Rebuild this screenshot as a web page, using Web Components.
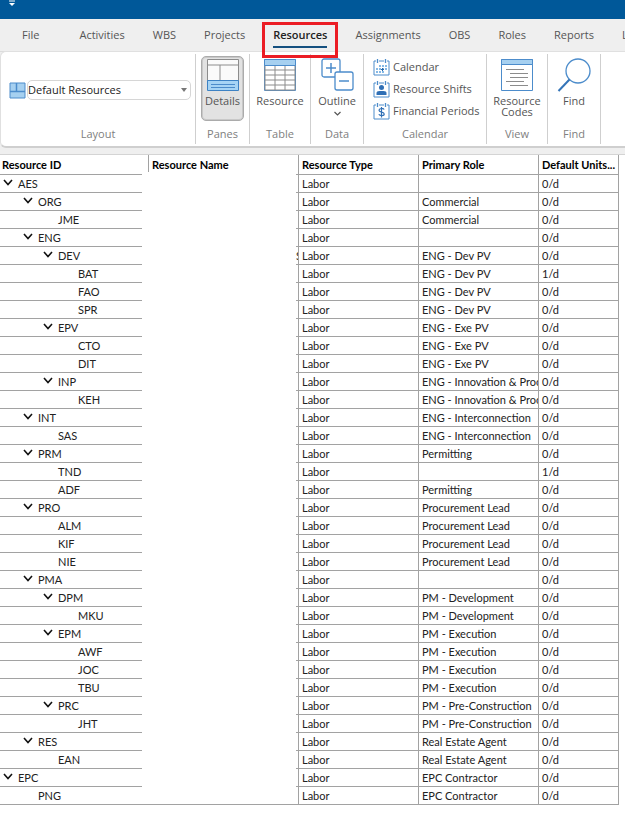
<!DOCTYPE html>
<html lang="en">
<head>
<meta charset="utf-8">
<title>Resources</title>
<style>
  html, body { margin: 0; }
  body {
    background: #fff;
    color: #444;
    font: 11px/16px "Open Sans", "Noto Sans", sans-serif;
    overflow-x: hidden;
  }
</style>
</head>
<body>
<resource-app></resource-app>

<template id="resource-app">
  <style>
    :host { display: block; }
    .chrome { background: #efefef; overflow: hidden; padding-bottom: 6px; }
    .small { width: 17px; height: 17px; flex: none; }
    .large { width: 34px; height: 34px; display: block; }
    svg { fill: none; stroke: #4c8ccb; }
  </style>
  <div class="chrome">
    <title-bar></title-bar>
    <ribbon-tabs>
      <ribbon-tab class="file">File</ribbon-tab>
      <ribbon-tab>Activities</ribbon-tab>
      <ribbon-tab>WBS</ribbon-tab>
      <ribbon-tab>Projects</ribbon-tab>
      <ribbon-tab selected>Resources</ribbon-tab>
      <ribbon-tab>Assignments</ribbon-tab>
      <ribbon-tab>OBS</ribbon-tab>
      <ribbon-tab>Roles</ribbon-tab>
      <ribbon-tab>Reports</ribbon-tab>
      <ribbon-tab>L</ribbon-tab>
    </ribbon-tabs>
    <ribbon-panel>
      <ribbon-group label="Layout" style="--width:195px">
        <layout-picker>
          <svg slot="icon" class="small" viewBox="0 0 17 17"><path d="M1 1h15v15H1z" fill="#a6d0f0"/><path d="M1 9.500h15M7.500 1v8.500" stroke-width="1.500"/></svg>
        </layout-picker>
      </ribbon-group>
      <ribbon-group label="Panes" style="--width:54px">
        <ribbon-button pressed label="Details">
          <svg class="large" viewBox="0 0 34 34"><path d="M1.500 1.500h31v22h-31z" fill="#fafafa" stroke="#8c8c8c"/><path d="M1.500 7h31M14 7v15" stroke="#8c8c8c"/><path d="M1.500 22.500h31v10h-31z" fill="#a6d4f5" stroke="#3d82c4"/><path d="M5 26.500h24M5 29.500h24"/></svg>
        </ribbon-button>
      </ribbon-group>
      <ribbon-group label="Table" style="--width:61px">
        <ribbon-button label="Resource">
          <svg class="large" viewBox="0 0 34 34"><path d="M1.500 1.500h31v31h-31z" fill="#fff"/><path d="M2 7v25M12 7v25M22 7v25M32 7v25M2 12h30M2 17h30M2 22h30M2 27h30M2 32h30" stroke="#8c8c8c"/><path d="M1.500 1.500h31v6h-31z" fill="#a6d0f0"/></svg>
        </ribbon-button>
      </ribbon-group>
      <ribbon-group label="Data" style="--width:53px">
        <ribbon-button label="Outline" menu>
          <svg class="large" viewBox="-1 0 34 34"><rect x="1" y="1" width="18" height="18" rx="2" fill="#fff" stroke-width="1.300"/><path d="M5 10h10M10 5v10" stroke-width="1.500"/><rect x="14" y="14" width="18" height="18" rx="2" fill="#fff" stroke-width="1.300"/><path d="M18 23h10" stroke-width="1.500"/></svg>
        </ribbon-button>
      </ribbon-group>
      <ribbon-group label="Calendar" style="--width:123px">
        <ribbon-button row label="Calendar">
          <svg class="small" viewBox="0 0 17 17"><path d="M3 2H1v14h15V2h-2M6 2h5"/><path d="M4.500 0v4M12.500 0v4" stroke-width="1.300"/><path d="M6 7h8M3 10h11M3 13h8" stroke="#85b9e6" stroke-width="2" stroke-dasharray="2 1"/><path d="M8 10.500h3M9.500 9v3" stroke="#2466aa"/></svg>
        </ribbon-button>
        <ribbon-button row label="Resource Shifts">
          <svg class="small" viewBox="0 0 17 17"><path d="M3 2H1v14h15V2h-2M6 2h5"/><path d="M4.500 0v4M12.500 0v4" stroke-width="1.300"/><circle cx="8.500" cy="6.500" r="2.500" fill="#2f6fb5" stroke="none"/><path d="M3.500 14v-2q0-2 3-2h4q3 0 3 2v2z" fill="#2f6fb5" stroke="none"/></svg>
        </ribbon-button>
        <ribbon-button row label="Financial Periods">
          <svg class="small" viewBox="0 0 17 17"><path d="M3 2H1v14h15V2h-2M6 2h5"/><path d="M4.500 0v4M12.500 0v4" stroke-width="1.300"/><path d="M11.200 6.500C10 5 6 5 6 7.300S11.200 8.800 11.200 11 7 13.200 5.800 11.300M8.500 4v10.500" stroke="#2f6fb5" stroke-width="1.200"/></svg>
        </ribbon-button>
      </ribbon-group>
      <ribbon-group label="View" style="--width:61px">
        <ribbon-button label="Resource Codes">
          <svg class="large" viewBox="0 0 34 34"><path d="M1.500 1.500h31v31h-31z" fill="#fff"/><path d="M1.500 1.500h31v5h-31z" fill="#a6d0f0"/><path d="M6 11.500h18M10 15.500h18M10 19.500h18M6 23.500h18M10 27.500h18" stroke="#8c8c8c"/></svg>
        </ribbon-button>
      </ribbon-group>
      <ribbon-group label="Find" style="--width:53px">
        <ribbon-button label="Find">
          <svg class="large" viewBox="0 0 34 34"><circle cx="21" cy="13" r="12" fill="#fff" stroke-width="1.300"/><path d="M12.500 21.500L1.500 33" stroke="#3474b8" stroke-width="2"/></svg>
        </ribbon-button>
      </ribbon-group>
    </ribbon-panel>
  </div>
  <resource-grid></resource-grid>
</template>

<template id="title-bar">
  <style>
    :host { display: block; height: 19px; background: #005899; }
    button { display: block; margin-left: 7px; padding: 0; border: 0; background: none; }
    svg { display: block; width: 10px; height: 7px; }
  </style>
  <button aria-label="Customize toolbar"><svg viewBox="0 0 10 7"><path d="M2 1h6" stroke="#fff"/><path d="M2 3h6L5 6z" fill="#fff"/></svg></button>
</template>

<template id="ribbon-tabs">
  <style>
    :host { display: block; }
    nav { display: flex; height: 32px; border-bottom: 1px solid #dcdcdc; }
  </style>
  <nav><slot></slot></nav>
</template>

<template id="ribbon-tab">
  <style>
    :host { display: block; flex: none; position: relative; padding: 8px 14px 0; color: #555; }
    :host(.file) { padding: 8px 26px 0 22px; }
    a { display: block; color: inherit; text-decoration: none; white-space: nowrap; height: 19px; }
    :host([selected]) { font-weight: 600; color: #222; }
    :host([selected]) a { border-bottom: 2px solid #14507f; }
    :host([selected])::after {
      content: ""; position: absolute; z-index: 2; top: 3px; bottom: -7px; left: 3px; right: 3px;
      border: 3px solid #eb1c24;
    }
  </style>
  <a href="#"><slot></slot></a>
</template>

<template id="ribbon-panel">
  <style>
    :host {
      display: flex; box-sizing: border-box; height: 97px; margin: -1px -8px 0 0; background: #fff;
      border: 1px solid #e0e0e0; border-bottom: 2px solid #cfcfcf; border-radius: 6px;
    }
  </style>
  <slot></slot>
</template>

<template id="ribbon-group">
  <style>
    :host {
      display: flex; flex-direction: column; flex: none; box-sizing: border-box; width: var(--width);
      margin: 2px 0; border-right: 1px solid #cfcfcf;
    }
    .items { flex: 1; padding-top: 2px; }
    .label { text-align: center; color: #808080; height: 18px; }
  </style>
  <div class="items"><slot></slot></div>
  <div class="label"></div>
</template>

<template id="ribbon-button">
  <style>
    :host { display: flex; justify-content: center; }
    button {
      display: flex; flex-direction: column; align-items: center; box-sizing: border-box;
      padding: 1px 0 0; border: 1px solid transparent; border-radius: 5px; background: none;
      font: inherit; line-height: 11px; color: #555; height: 65px; min-width: 43px;
    }
    .text { padding-top: 3px; max-width: 56px; }
    :host([pressed]) button { background: #e2e2e2; border-color: #ababab; box-shadow: inset 0 0 0 1px #c8c8c8; }
    :host([row]) { justify-content: flex-start; }
    :host([row]) button { flex-direction: row; gap: 3px; height: 22px; padding: 0 0 0 8px; }
    :host([row]) .text { padding: 0; max-width: none; white-space: nowrap; line-height: 16px; }
    .chevron { display: none; width: 7px; height: 5px; margin-top: 5px; }
    :host([menu]) .chevron { display: block; }
  </style>
  <button><slot></slot><span class="text"></span><svg class="chevron" viewBox="0 0 7 5"><path d="M.5 1l3 3 3-3" fill="none" stroke="#555" stroke-width="1.200"/></svg></button>
</template>

<template id="layout-picker">
  <style>
    :host { display: flex; align-items: center; gap: 1px; padding: 24px 4px 0 8px; }
    .box { flex: 1; position: relative; display: flex; align-items: center; }
    select {
      appearance: none; width: 100%; height: 20px; padding: 0 16px 0 0; border: 1px solid #d6d6d6; border-radius: 5px;
      background: #fff; font: inherit; color: #222;
    }
    .arrow { position: absolute; right: 4px; width: 6px; height: 4px; pointer-events: none; }
  </style>
  <slot name="icon"></slot>
  <div class="box">
    <select aria-label="Layout"><option>Default Resources</option></select>
    <svg class="arrow" viewBox="0 0 6 4"><path d="M0 0h6L3 4z" fill="#777"/></svg>
  </div>
</template>

<template id="resource-grid">
  <style>
    :host { display: block; border-top: 1px solid #d4d4d4; font: 11px/17px Lato, Carlito, sans-serif; color: #222; --line: #a2a2a2; }
    table { width: calc(100% - 6px); table-layout: fixed; border-collapse: separate; border-spacing: 0; }
    .id { width: 149px; } .name { width: 150px; } .type, .role { width: 120px; }
    th, td {
      box-sizing: border-box; padding: 0 0 0 3px; text-align: left; white-space: nowrap; overflow: hidden;
      border-right: 1px solid var(--line); border-bottom: 1px solid var(--line); height: 18px;
    }
    th { height: 20px; font-weight: 700; color: #000; }
    th:nth-child(-n+2), td:nth-child(-n+2) { border-bottom: 0; padding-bottom: 1px; background: linear-gradient(var(--line), var(--line)) no-repeat; }
    th:nth-child(1), td:nth-child(1) { border-right: 0; padding-left: 2px; background-size: calc(100% - 7px) 1px; background-position: left bottom; }
    th:nth-child(2), td:nth-child(2) { background-size: 2px 1px; background-position: right bottom; }
    th:nth-child(1) { background-image: linear-gradient(var(--line), var(--line)), linear-gradient(var(--line), var(--line)); background-size: calc(100% - 7px) 1px, 1px 17px; background-position: left bottom, right top; }
    tbody tr:last-child td:nth-child(-n+2) { background-size: 100% 1px; }
    .node { display: flex; align-items: center; padding-left: calc(var(--depth) * 20px); height: 17px; }
    button { width: 16px; height: 17px; padding: 0 0 3px 1px; border: 0; background: none; display: flex; align-items: center; flex: none; }
    .gap { width: 16px; flex: none; }
    button svg { width: 10px; height: 7px; }
    .cut { display: block; width: 2px; height: 17px; margin-left: auto; overflow: hidden; }
  </style>
  <table>
    <colgroup><col class="id"><col class="name"><col class="type"><col class="role"><col></colgroup>
    <thead><tr><th>Resource ID</th><th>Resource Name</th><th>Resource Type</th><th>Primary Role</th><th>Default Units...</th></tr></thead>
    <tbody></tbody>
  </table>
</template>

<script>
  class BaseElement extends HTMLElement {
    constructor() {
      super();
      const template = document.getElementById(this.localName);
      this.attachShadow({ mode: "open" }).append(template.content.cloneNode(true));
    }
  }

  class RibbonGroup extends BaseElement {
    connectedCallback() {
      this.shadowRoot.querySelector(".label").textContent = this.getAttribute("label");
    }
  }

  class RibbonButton extends BaseElement {
    connectedCallback() {
      this.shadowRoot.querySelector(".text").textContent = this.getAttribute("label");
      if (this.hasAttribute("pressed")) {
        this.shadowRoot.querySelector("button").setAttribute("aria-pressed", "true");
      }
    }
  }

  // Each row: depth, id, role, units, has children, visible part of the name
  const ROWS = [
    [0, "AES", "", "0/d", 1], [1, "ORG", "Commercial", "0/d", 1], [2, "JME", "Commercial", "0/d"],
    [1, "ENG", "", "0/d", 1], [2, "DEV", "ENG - Dev PV", "0/d", 1, "S"],
    [3, "BAT", "ENG - Dev PV", "1/d"], [3, "FAO", "ENG - Dev PV", "0/d"], [3, "SPR", "ENG - Dev PV", "0/d"],
    [2, "EPV", "ENG - Exe PV", "0/d", 1], [3, "CTO", "ENG - Exe PV", "0/d"], [3, "DIT", "ENG - Exe PV", "0/d"],
    [2, "INP", "ENG - Innovation & Proc", "0/d", 1], [3, "KEH", "ENG - Innovation & Proc", "0/d"],
    [1, "INT", "ENG - Interconnection", "0/d", 1], [2, "SAS", "ENG - Interconnection", "0/d"],
    [1, "PRM", "Permitting", "0/d", 1], [2, "TND", "", "1/d"], [2, "ADF", "Permitting", "0/d"],
    [1, "PRO", "Procurement Lead", "0/d", 1], [2, "ALM", "Procurement Lead", "0/d"],
    [2, "KIF", "Procurement Lead", "0/d"], [2, "NIE", "Procurement Lead", "0/d"],
    [1, "PMA", "", "0/d", 1], [2, "DPM", "PM - Development", "0/d", 1], [3, "MKU", "PM - Development", "0/d"],
    [2, "EPM", "PM - Execution", "0/d", 1], [3, "AWF", "PM - Execution", "0/d"],
    [3, "JOC", "PM - Execution", "0/d"], [3, "TBU", "PM - Execution", "0/d"],
    [2, "PRC", "PM - Pre-Construction", "0/d", 1], [3, "JHT", "PM - Pre-Construction", "0/d"],
    [1, "RES", "Real Estate Agent", "0/d", 1], [2, "EAN", "Real Estate Agent", "0/d"],
    [0, "EPC", "EPC Contractor", "0/d", 1], [1, "PNG", "EPC Contractor", "0/d"]
  ];

  class ResourceGrid extends BaseElement {
    connectedCallback() {
      this.shadowRoot.querySelector("tbody").innerHTML = ROWS.map(([depth, id, role, units, parent, name]) => `
        <tr>
          <td><div class="node" style="--depth:${depth}">${parent
            ? `<button aria-label="Collapse ${id}" aria-expanded="true"><svg viewBox="0 0 10 7"><path d="M1 1l4 4.500L9 1" fill="none" stroke="#111" stroke-width="1.600"/></svg></button>`
            : `<span class="gap"></span>`}<span>${id}</span></div></td>
          <td>${name ? `<span class="cut">${name}</span>` : ""}</td>
          <td>Labor</td><td>${role.replace("&", "&amp;")}</td><td>${units}</td>
        </tr>`).join("");
    }
  }

  customElements.define("title-bar", class extends BaseElement {});
  customElements.define("ribbon-tabs", class extends BaseElement {});
  customElements.define("ribbon-tab", class extends BaseElement {});
  customElements.define("ribbon-panel", class extends BaseElement {});
  customElements.define("ribbon-group", RibbonGroup);
  customElements.define("ribbon-button", RibbonButton);
  customElements.define("layout-picker", class extends BaseElement {});
  customElements.define("resource-grid", ResourceGrid);
  customElements.define("resource-app", class extends BaseElement {});
</script>
</body>
</html>
